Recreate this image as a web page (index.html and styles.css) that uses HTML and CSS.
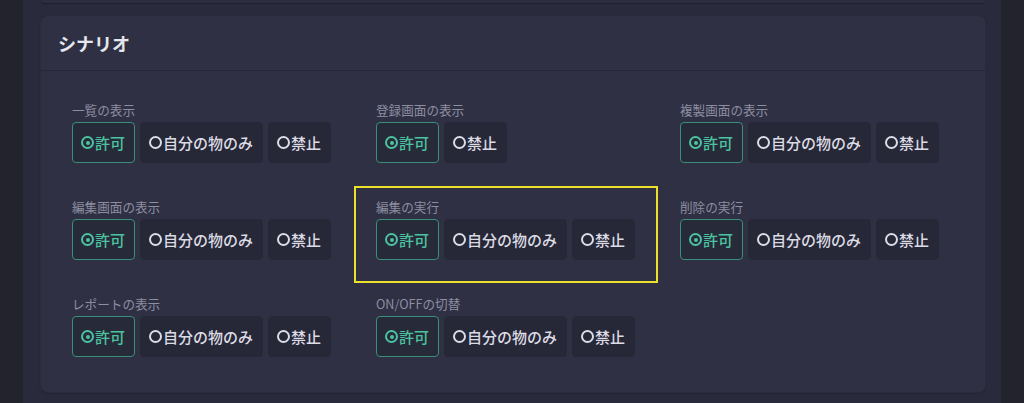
FILE: index.html
```html
<!DOCTYPE html>
<html lang="ja">
<head>
<meta charset="utf-8">
<title>シナリオ</title>
<link rel="stylesheet" href="styles.css">
</head>
<body>
<div class="page">
  <div class="prev-card"></div>
  <section class="card">
    <header class="card-header">シナリオ</header>
    <div class="card-body">
      <div class="grid">
        <div class="cell">
          <div class="label">一覧の表示</div>
          <div class="btns">
            <span class="btn active"><span class="radio"></span>許可</span>
            <span class="btn"><span class="radio"></span>自分の物のみ</span>
            <span class="btn"><span class="radio"></span>禁止</span>
          </div>
        </div>
        <div class="cell">
          <div class="label">登録画面の表示</div>
          <div class="btns">
            <span class="btn active"><span class="radio"></span>許可</span>
            <span class="btn"><span class="radio"></span>禁止</span>
          </div>
        </div>
        <div class="cell">
          <div class="label">複製画面の表示</div>
          <div class="btns">
            <span class="btn active"><span class="radio"></span>許可</span>
            <span class="btn"><span class="radio"></span>自分の物のみ</span>
            <span class="btn"><span class="radio"></span>禁止</span>
          </div>
        </div>
        <div class="cell">
          <div class="label">編集画面の表示</div>
          <div class="btns">
            <span class="btn active"><span class="radio"></span>許可</span>
            <span class="btn"><span class="radio"></span>自分の物のみ</span>
            <span class="btn"><span class="radio"></span>禁止</span>
          </div>
        </div>
        <div class="cell highlight">
          <div class="label">編集の実行</div>
          <div class="btns">
            <span class="btn active"><span class="radio"></span>許可</span>
            <span class="btn"><span class="radio"></span>自分の物のみ</span>
            <span class="btn"><span class="radio"></span>禁止</span>
          </div>
        </div>
        <div class="cell">
          <div class="label">削除の実行</div>
          <div class="btns">
            <span class="btn active"><span class="radio"></span>許可</span>
            <span class="btn"><span class="radio"></span>自分の物のみ</span>
            <span class="btn"><span class="radio"></span>禁止</span>
          </div>
        </div>
        <div class="cell">
          <div class="label">レポートの表示</div>
          <div class="btns">
            <span class="btn active"><span class="radio"></span>許可</span>
            <span class="btn"><span class="radio"></span>自分の物のみ</span>
            <span class="btn"><span class="radio"></span>禁止</span>
          </div>
        </div>
        <div class="cell">
          <div class="label">ON/OFFの切替</div>
          <div class="btns">
            <span class="btn active"><span class="radio"></span>許可</span>
            <span class="btn"><span class="radio"></span>自分の物のみ</span>
            <span class="btn"><span class="radio"></span>禁止</span>
          </div>
        </div>
      </div>
    </div>
  </section>
</div>
</body>
</html>
```
FILE: styles.css
```css
* { box-sizing: border-box; }
html, body { margin: 0; padding: 0; }
body {
  background: #22232d;
  font-family: "Noto Sans CJK JP", "Noto Sans", sans-serif;
  height: 403px;
  overflow: hidden;
}
.page {
  margin-left: 23px;
  width: 978px;
  height: 403px;
  background: #292a3b;
  padding: 0 16px 0 18px;
}
.prev-card {
  height: 3px;
  background: #2c2d40;
  border-radius: 0 0 6px 6px;
  box-shadow: 0 1px 1px rgba(0,0,0,0.25);
}
.card {
  margin-top: 13px;
  height: 376px;
  background: #2f3044;
  border-radius: 7px;
  box-shadow: 0 0 0 1px #2a2b3c, 0 1px 3px rgba(0,0,0,0.3);
}
.card-header {
  height: 55px;
  border-bottom: 1px solid #26273a;
  padding-left: 17px;
  display: flex;
  align-items: center;
  font-size: 18px;
  font-weight: 700;
  color: #e6e6ec;
  padding-bottom: 1px;
}
.card-body {
  padding: 18px 0 0 9px;
}
.grid {
  display: grid;
  grid-template-columns: repeat(3, 304px);
  grid-auto-rows: 97px;
}
.cell {
  padding: 13px 22px 0 22px;
}
.highlight {
  outline: 2px solid #ebe02a;
  outline-offset: -2px;
}
.label {
  font-size: 12.6px;
  line-height: 16px;
  color: #8d8ea0;
  margin-bottom: 4px;
}
.btns {
  display: flex;
  gap: 5px;
}
.btn {
  height: 41px;
  display: inline-flex;
  align-items: center;
  padding: 0 9px 0 8px;
  background: #262737;
  border: 1px solid #262737;
  border-radius: 4px;
  color: #dcdce4;
  font-size: 15px;
  font-weight: 500;
  white-space: nowrap;
}
.radio {
  width: 13px;
  height: 13px;
  border: 2.5px solid currentColor;
  border-radius: 50%;
  margin-right: 1px;
  display: inline-flex;
  align-items: center;
  justify-content: center;
}
.btn.active {
  color: #4cc3a0;
  border-color: #3a8f7a;
  background: #272a38;
}
.btn.active .radio::after {
  content: "";
  width: 4px;
  height: 4px;
  border-radius: 50%;
  background: currentColor;
}
```
